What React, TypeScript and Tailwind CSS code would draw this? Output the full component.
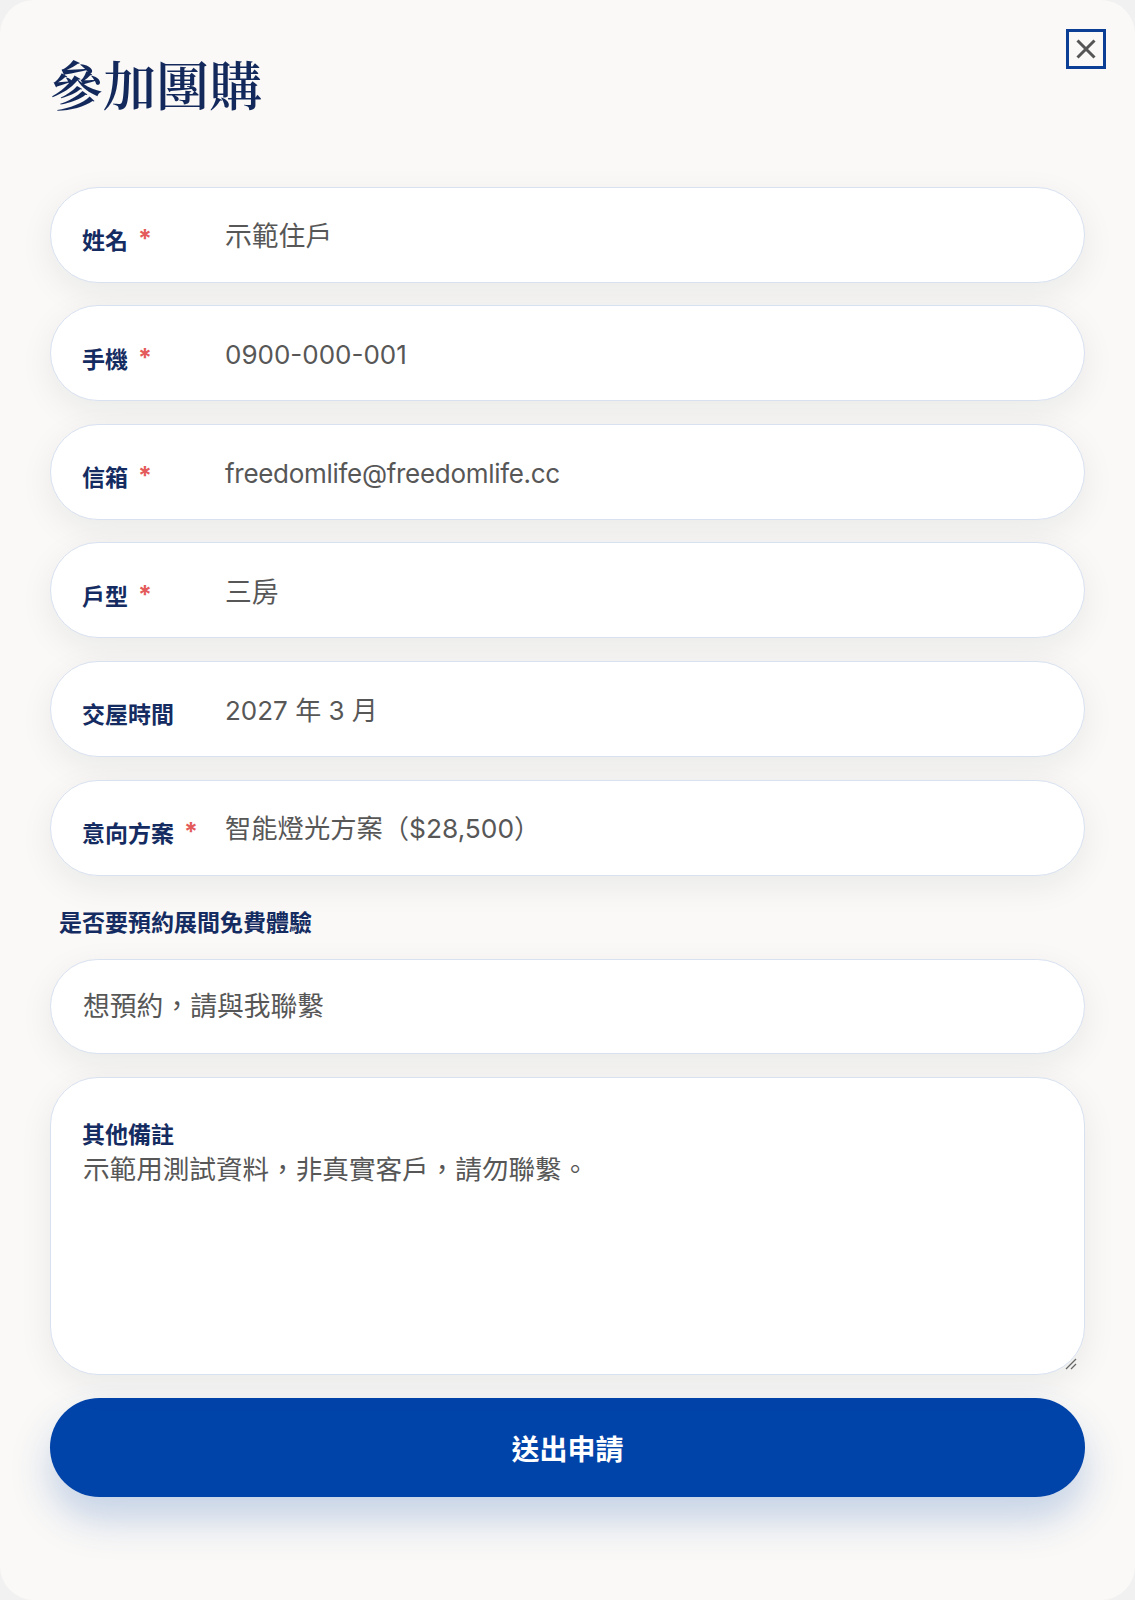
import React from "react";

const font = { fontFamily: "Inter, 'Noto Sans CJK TC', 'Noto Sans', sans-serif" };

function Field({
  label,
  value,
  required,
  valueClass,
}: {
  label: string;
  value: string;
  required?: boolean;
  valueClass?: string;
}) {
  return (
    <div className="flex h-[96px] items-center rounded-full border-[1.5px] border-[#d8e1f0] bg-white pl-[31px] pr-8 shadow-[0_10px_34px_rgba(20,30,50,0.07)]">
      <div className="mt-[14px] flex w-[143px] shrink-0 items-center text-[23px] font-bold leading-none text-[#142c61]">
        <span>{label}</span>
        {required && <span className="ml-[10px] mt-[-4px] text-[25px] font-bold text-[#e45b5b]">*</span>}
      </div>
      <div className={"mt-[4px] leading-none text-[#575757] " + (valueClass ?? "text-[26px]")}>{value}</div>
    </div>
  );
}

export default function App() {
  return (
    <div className="min-h-[1600px] w-[1135px] bg-[#f1f1f1]" style={font}>
      <div className="relative h-[1600px] w-[1135px] rounded-[34px] bg-[#faf9f7] px-[50px] pt-[52px]">
        <button className="absolute right-[29px] top-[29px] flex h-[40px] w-[40px] items-center justify-center border-[3px] border-[#0b3f95] bg-transparent">
          <svg width="22" height="22" viewBox="0 0 22 22" fill="none" stroke="#555" strokeWidth="3" strokeLinecap="butt">
            <path d="M2.5 2.5L19.5 19.5M19.5 2.5L2.5 19.5" />
          </svg>
        </button>
        <h1
          className="text-[53px] font-semibold leading-[1.2] text-[#13295c]"
          style={{ fontFamily: "'Noto Serif CJK TC', 'Noto Serif TC', 'Liberation Serif', 'Noto Sans CJK TC', serif" }}
        >
          參加團購
        </h1>
        <div className="mt-[71px] flex flex-col gap-[22.6px]">
          <Field label="姓名" value="示範住戶" required valueClass="text-[26.8px]" />
          <Field label="手機" value="0900-000-001" required />
          <Field label="信箱" value="freedomlife@freedomlife.cc" required valueClass="text-[26px] tracking-[-0.3px]" />
          <Field label="戶型" value="三房" required valueClass="text-[26.8px]" />
          <Field label="交屋時間" value="2027 年 3 月" />
          <Field label="意向方案" value="智能燈光方案（$28,500）" required valueClass="text-[26.3px]" />
        </div>
        <div className="mt-[33px] pl-[9px] text-[23px] font-bold leading-[29px] text-[#142c61]">是否要預約展間免費體驗</div>
        <div className="mt-[21px] flex h-[95px] items-center rounded-full border-[1.5px] border-[#d8e1f0] bg-white pl-[32px] shadow-[0_10px_34px_rgba(20,30,50,0.07)]">
          <span className="text-[26.8px] leading-none text-[#575757]">想預約，請與我聯繫</span>
        </div>
        <div className="relative mt-[23px] h-[298px] rounded-[48px] border-[1.5px] border-[#d8e1f0] bg-white pl-[31px] pt-[43px] shadow-[0_10px_34px_rgba(20,30,50,0.07)]">
          <div className="text-[23px] font-bold leading-[29px] text-[#142c61]">其他備註</div>
          <div className="pl-[1px] text-[26.6px] leading-[39px] text-[#575757]">示範用測試資料，非真實客戶，請勿聯繫。</div>
          <svg className="absolute bottom-[3px] right-[6px]" width="14" height="14" viewBox="0 0 14 14" fill="none" stroke="#666" strokeWidth="1.3">
            <path d="M2 12L12 2M7 12L12 7" />
          </svg>
        </div>
        <button className="mt-[23px] flex h-[99px] w-full items-center justify-center rounded-full bg-[#0043a9] pt-[5px] text-[28px] font-bold text-white shadow-[0_22px_40px_rgba(0,67,169,0.22)]">
          送出申請
        </button>
      </div>
    </div>
  );
}
